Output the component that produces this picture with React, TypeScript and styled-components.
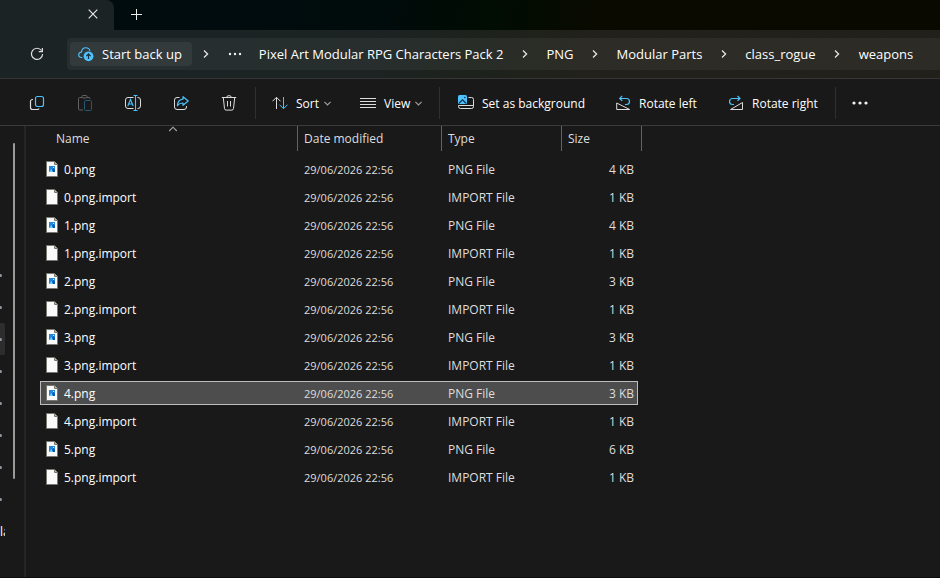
import React from "react";
import styled, { createGlobalStyle } from "styled-components";

const GlobalStyle = createGlobalStyle`
  *, *::before, *::after { box-sizing: border-box; }
  html, body, #root { height: 100%; }
  body {
    margin: 0;
    overflow: hidden;
    background: #191919;
    color: #ffffff;
    font-family: "Segoe UI", "Open Sans", "Noto Sans", sans-serif;
    font-size: 12px;
  }
  button { font: inherit; color: inherit; background: none; border: 0; padding: 0; }
  svg { display: block; flex: none; }
`;

const accent = "#4cc2ff";

const Window = styled.div`
  display: flex;
  flex-direction: column;
  height: 100vh;
  border-bottom: 1px solid #0c0c0c;
`;

const TitleBar = styled.header`
  display: flex;
  height: 30px;
  background: linear-gradient(100deg, #000c0e 20%, #000b0c 40%, #010c02 53%, #0a0a00 64%, #0a0900 100%);
`;

const Tab = styled.div`
  display: flex;
  align-items: center;
  justify-content: flex-end;
  width: 114px;
  padding: 0 11px 2px 0;
  border-radius: 0 8px 0 0;
  background: #1c2324;
`;

const TitleButton = styled.button`
  display: grid;
  place-items: center;
  width: 20px;
  height: 20px;
`;

const NewTabButton = styled(TitleButton)`
  width: 28px;
  height: 28px;
  margin-left: 8px;
`;

const NavigationBar = styled.nav`
  display: flex;
  align-items: center;
  height: 49px;
  padding-left: 27px;
  border-bottom: 1px solid #363636;
  background: linear-gradient(100deg, #1c2324 20%, #1c2322 40%, #1e221c 52%, #22211b 62%, #21201a 100%);
`;

const AddressBar = styled.div`
  display: flex;
  flex: 1;
  align-items: center;
  height: 32px;
  margin-left: 20px;
  padding-left: 3px;
  border-radius: 4px 0 0 4px;
  background: rgba(255, 255, 255, 0.05);
  font-size: 13px;
  white-space: nowrap;
  overflow: hidden;
`;

const BackupButton = styled.button`
  display: flex;
  align-items: center;
  gap: 8px;
  height: 24px;
  padding: 0 10px 0 8px;
  border-radius: 4px;
  background: rgba(255, 255, 255, 0.06);
`;

const CrumbArrow = styled.button<{ $width?: number }>`
  display: grid;
  flex: none;
  place-items: center;
  width: ${(p) => p.$width ?? 43}px;
  height: 24px;
`;

const OverflowButton = styled.button`
  display: grid;
  place-items: center;
  width: 30px;
  height: 24px;
  margin-right: 9px;
`;

const Crumb = styled.button`
  height: 24px;
`;

const Toolbar = styled.div`
  display: flex;
  align-items: center;
  height: 47px;
  padding: 2px 0 0 13px;
  border-bottom: 1px solid #3a3a3a;
  background: #191919;
  white-space: nowrap;
`;

const IconButton = styled.button`
  display: grid;
  place-items: center;
  width: 48px;
  height: 32px;
`;

const CommandButton = styled.button<{ $width: number; $inset?: number }>`
  display: flex;
  align-items: center;
  gap: 5px;
  min-width: ${(p) => p.$width}px;
  height: 32px;
  padding-left: ${(p) => p.$inset ?? 18}px;

  & > svg:first-child { margin-right: 3px; }
`;

const Separator = styled.span<{ $before?: number }>`
  width: 1px;
  height: 32px;
  margin-left: ${(p) => p.$before ?? 0}px;
  background: #2f2f2f;
`;

const Body = styled.div`
  display: flex;
  flex: 1;
  min-height: 0;
`;

const SidePane = styled.aside`
  display: flex;
  width: 26px;
  border-right: 2px solid #262626;
`;

const Tree = styled.ul`
  width: 5px;
  margin: 0;
  padding: 133px 0 0;
  overflow: hidden;
  list-style: none;
`;

const TreeItem = styled.li<{ $active?: boolean }>`
  display: flex;
  align-items: center;
  height: 32px;
  border-radius: 0 2px 2px 0;
  background: ${(p) => (p.$active ? "#2d2d2d" : "transparent")};
`;

const Pin = styled.span`
  width: 2px;
  height: 3px;
  border-radius: 0 2px 2px 0;
  background: #8d97a3;
`;

const ScrollThumb = styled.div`
  width: 2px;
  height: 336px;
  margin: 17px 0 0 8px;
  border-radius: 1px;
  background: #9a9a9a;
`;

const FileTable = styled.table`
  display: block;
  flex: 1;
  border-spacing: 0;
`;

const TableHead = styled.thead`
  display: block;
  padding-left: 23px;
`;

const HeaderRow = styled.tr`
  display: grid;
  grid-template-columns: 249px 144px 120px 80px;
`;

const HeaderCell = styled.th`
  position: relative;
  height: 25px;
  padding: 0 6px;
  border-right: 1px solid #636363;
  color: #dedede;
  font-weight: 400;
  line-height: 25px;
  text-align: left;

  &:first-child { padding-left: 7px; }
`;

const SortMark = styled.svg`
  position: absolute;
  top: 0;
  left: 50%;
  transform: translateX(-50%);
`;

const TableBody = styled.tbody`
  display: block;
  padding: 6px 0 0 14px;
`;

const FileRow = styled.tr<{ $selected: boolean }>`
  display: grid;
  grid-template-columns: 258px 144px 120px 76px;
  align-items: center;
  width: 598px;
  height: 24px;
  margin-bottom: 4px;
  color: #dedede;
  background: ${(p) => (p.$selected ? "#4d4d4d" : "transparent")};
  outline: ${(p) => (p.$selected ? "1px solid #bdbdbd" : "none")};
  outline-offset: -1px;
`;

const NameCell = styled.td`
  display: flex;
  align-items: center;
  gap: 6px;
  padding: 0 6px;
  color: #ffffff;
`;

const Cell = styled.td`
  padding: 0 6px;
`;

const DateCell = styled(Cell)`
  font-size: 11px;
`;

const SizeCell = styled(Cell)`
  padding-right: 4px;
  text-align: right;
`;

const Chevron = () => (
  <svg width="6" height="8" viewBox="0 0 6 8" fill="none" stroke="#e6e6e6" strokeWidth="1.3">
    <path d="M1 0.5 4.6 4 1 7.5" />
  </svg>
);

const DownChevron = () => (
  <svg width="7" height="5" viewBox="0 0 7 5" fill="none" stroke="#a0a0a0" strokeWidth="1.1">
    <path d="M0.4 0.8 3.5 3.9 6.6 0.8" />
  </svg>
);

const Dots = ({ size = 2 }: { size?: number }) => (
  <svg width="16" height="4" viewBox="0 0 16 4" fill="#f2f2f2">
    <circle cx={size > 2 ? 2 : 3} cy="2" r={size > 2 ? 1.6 : 1.2} />
    <circle cx="8" cy="2" r={size > 2 ? 1.6 : 1.2} />
    <circle cx={size > 2 ? 14 : 13} cy="2" r={size > 2 ? 1.6 : 1.2} />
  </svg>
);

const CloudIcon = () => (
  <svg width="16" height="16" viewBox="0 0 16 16" fill="none">
    <path d="M4.3 11.5H3.6C1.8 11.5.7 10.3.7 8.8S1.9 6.2 3.5 6.1C3.7 3.5 5.3 1.7 7.8 1.7S11.6 3.2 12 5" stroke={accent} strokeWidth="1.1" />
    <circle cx="10.5" cy="10.3" r="4.9" fill={accent} />
    <path d="M10.5 13V8M8.3 10.1 10.5 7.9 12.7 10.1" stroke="#1d3340" strokeWidth="1.2" />
  </svg>
);

const CopyIcon = () => (
  <svg width="16" height="16" viewBox="0 0 16 16" fill="none">
    <rect x="6.5" y="1.5" width="8" height="10" rx="2" stroke={accent} strokeWidth="1.2" />
    <path d="M4 4.5H3.5a2 2 0 0 0-2 2V12.5a2 2 0 0 0 2 2H8.5a1.5 1.5 0 0 0 1.5-1" stroke="#dcdcdc" strokeWidth="1.2" />
  </svg>
);

const PasteIcon = () => (
  <svg width="16" height="16" viewBox="0 0 16 16" fill="none">
    <path d="M5 2.5H2.5a1 1 0 0 0-1 1V14a1 1 0 0 0 1 1H6M10 2.5h2a1 1 0 0 1 1 1V4M5 1.5a1 1 0 0 1 1-1h3a1 1 0 0 1 1 1v.5a1 1 0 0 1-1 1H6a1 1 0 0 1-1-1z" stroke="#606060" />
    <rect x="7.5" y="5.5" width="7" height="10" rx="1" stroke="#265a74" />
  </svg>
);

const RenameIcon = () => (
  <svg width="18" height="16" viewBox="0 0 18 16" fill="none">
    <path d="M9.5 2.5H4a2.5 2.5 0 0 0-2.5 2.5V11A2.5 2.5 0 0 0 4 13.5H9.5M13.5 2.5H14A2.5 2.5 0 0 1 16.5 5V11A2.5 2.5 0 0 1 14 13.5H13.5" stroke="#dcdcdc" />
    <path d="M3.8 11 6.5 4.5 9.2 11M4.8 9H8.2M9.5.5H13.5M11.5.5V15.5M9.5 15.5H13.5" stroke={accent} strokeWidth="1.1" />
  </svg>
);

const ShareIcon = () => (
  <svg width="16" height="16" viewBox="0 0 16 16" fill="none">
    <path d="M6.5 2.5H4A2.5 2.5 0 0 0 1.5 5V12A2.5 2.5 0 0 0 4 14.5H11A2.5 2.5 0 0 0 13.5 12V11" stroke="#dcdcdc" />
    <path d="M10 1.7 15.2 6 10 10.3V8C7.3 7.9 5.7 8.9 4.4 10.7 4.6 6.9 6.6 4.4 10 4.1z" stroke={accent} strokeWidth="1.2" strokeLinejoin="round" />
  </svg>
);

const DeleteIcon = () => (
  <svg width="16" height="16" viewBox="0 0 16 16" fill="none" stroke="#dcdcdc">
    <path d="M.8 2.5H15.2M5.8 2.3a2.2 1.7 0 0 1 4.4 0M2.3 2.7 3.5 13.6A1.7 1.7 0 0 0 5.2 15.1H10.8A1.7 1.7 0 0 0 12.5 13.6L13.7 2.7M6.5 6V11.5M9.5 6V11.5" />
  </svg>
);

const SortIcon = () => (
  <svg width="16" height="14" viewBox="0 0 16 14" fill="none">
    <path d="M4.5 13V1.5M.5 5.3 4.5 1.3 8.5 5.3" stroke="#dcdcdc" />
    <path d="M11.5 1V12.5M7.5 8.7 11.5 12.7 15.5 8.7" stroke={accent} />
  </svg>
);

const ViewIcon = () => (
  <svg width="16" height="12" viewBox="0 0 16 12" stroke="#dcdcdc">
    <path d="M0 1.5H16M0 4.5H16M0 7.5H16M0 10.5H16" />
  </svg>
);

const BackgroundIcon = () => (
  <svg width="16" height="16" viewBox="0 0 16 16" fill="none">
    <path d="M10.5 2.5H13.5A2 2 0 0 1 15.5 4.5V11.5A2 2 0 0 1 13.5 13.5H2.5A2 2 0 0 1 .5 11.5V10.5H15.5" stroke="#dcdcdc" />
    <rect x="0" y="0" width="9" height="9" rx="1.5" fill={accent} />
    <path d="M1 8.3 4.5 4.8 8 8.3" stroke="#183343" strokeWidth="1.3" />
    <circle cx="6.8" cy="2.5" r=".8" fill="#183343" />
  </svg>
);

const RotateLeftIcon = () => (
  <svg width="15" height="16" viewBox="0 0 15 16" fill="none">
    <path d="M.7 8V14.5H13.7z" stroke="#dcdcdc" />
    <path d="M6.2 1 3.7 3.4 6.2 5.8M3.9 3.5H10.5A3 3 0 0 1 10.5 9.5H9" stroke={accent} strokeWidth="1.2" />
  </svg>
);

const RotateRightIcon = () => (
  <svg width="15" height="16" viewBox="0 0 15 16" fill="none">
    <path d="M13.5 7.5V14.5H1.5z" stroke="#dcdcdc" />
    <path d="M8.5 1 11 3.4 8.5 5.8M10.8 3.5H3.5A3 3 0 0 0 3.5 9.5H5" stroke={accent} strokeWidth="1.2" />
  </svg>
);

const FileIcon = ({ picture }: { picture: boolean }) => (
  <svg width="12" height="16" viewBox="0 0 12 16">
    <path d="M.5.5H8.5L11.5 3.5V15.5H.5z" fill="#fafafa" stroke="#77776f" />
    <path d="M8.5.5V3.5H11.5" fill="#b8b8b2" stroke="#77776f" />
    {picture && (
      <>
        <rect x="3" y="5" width="6" height="6" fill="#2584dc" />
        <path d="M3 11 5.5 8 8 11z" fill="#64cdf8" />
        <path d="M6 9 7.5 7 9 9V11H7z" fill="#0758b5" />
        <rect x="7" y="6" width="1" height="1" fill="#d8f2ff" />
      </>
    )}
  </svg>
);

const crumbs = ["Pixel Art Modular RPG Characters Pack 2", "PNG", "Modular Parts", "class_rogue", "weapons"];
const imageSizes = ["4 KB", "4 KB", "3 KB", "3 KB", "3 KB", "6 KB"];
const files = imageSizes.flatMap((size, i) => [
  { name: `${i}.png`, type: "PNG File", size, picture: true },
  { name: `${i}.png.import`, type: "IMPORT File", size: "1 KB", picture: false },
]);

export default function App() {
  return (
    <>
      <GlobalStyle />
      <Window>
        <TitleBar>
          <Tab>
            <TitleButton aria-label="Close tab">
              <svg width="10" height="10" viewBox="0 0 10 10" stroke="#ededed" strokeWidth="1.1">
                <path d="M.7.7 9.3 9.3M9.3.7.7 9.3" />
              </svg>
            </TitleButton>
          </Tab>
          <NewTabButton aria-label="New tab">
            <svg width="11" height="11" viewBox="0 0 11 11" stroke="#ededed">
              <path d="M0 5.5H11M5.5 0V11" />
            </svg>
          </NewTabButton>
        </TitleBar>

        <NavigationBar aria-label="Address">
          <TitleButton aria-label="Refresh">
            <svg width="14" height="14" viewBox="0 0 14 14" fill="none" stroke="#dcdcdc" strokeWidth="1.2">
              <path d="M11.5 3.5A5.6 5.6 0 1 0 12.6 7M12.4 1V4.6H8.7" />
            </svg>
          </TitleButton>
          <AddressBar>
            <BackupButton>
              <CloudIcon />
              Start back up
            </BackupButton>
            <CrumbArrow $width={28} aria-label="Root folders"><Chevron /></CrumbArrow>
            <OverflowButton aria-label="Parent folders"><Dots /></OverflowButton>
            {crumbs.map((name, i) => (
              <React.Fragment key={name}>
                {i > 0 && <CrumbArrow aria-label={`Browse ${crumbs[i - 1]}`}><Chevron /></CrumbArrow>}
                <Crumb>{name}</Crumb>
              </React.Fragment>
            ))}
          </AddressBar>
        </NavigationBar>

        <Toolbar role="toolbar">
          <IconButton aria-label="Copy"><CopyIcon /></IconButton>
          <IconButton aria-label="Paste" disabled><PasteIcon /></IconButton>
          <IconButton aria-label="Rename"><RenameIcon /></IconButton>
          <IconButton aria-label="Share"><ShareIcon /></IconButton>
          <IconButton aria-label="Delete"><DeleteIcon /></IconButton>
          <Separator $before={2} />
          <CommandButton $width={88} $inset={16}><SortIcon />Sort<DownChevron /></CommandButton>
          <CommandButton $width={95} $inset={16}><ViewIcon />View<DownChevron /></CommandButton>
          <Separator />
          <CommandButton $width={158}><BackgroundIcon />Set as background</CommandButton>
          <CommandButton $width={113}><RotateLeftIcon />Rotate left</CommandButton>
          <CommandButton $width={124}><RotateRightIcon />Rotate right</CommandButton>
          <Separator />
          <IconButton aria-label="See more"><Dots size={3} /></IconButton>
        </Toolbar>

        <Body>
          <SidePane aria-label="Folders">
            <Tree>
              {Array.from({ length: 8 }, (_, i) => (
                <TreeItem key={i} $active={i === 2}><Pin /></TreeItem>
              ))}
              <TreeItem>la</TreeItem>
            </Tree>
            <ScrollThumb />
          </SidePane>
          <FileTable>
            <TableHead>
              <HeaderRow>
                <HeaderCell aria-sort="ascending">
                  Name
                  <SortMark width="9" height="6" viewBox="0 0 9 6" fill="none" stroke="#a8a8a8" strokeWidth="1.1">
                    <path d="M.7 5 4.5 1.2 8.3 5" />
                  </SortMark>
                </HeaderCell>
                <HeaderCell>Date modified</HeaderCell>
                <HeaderCell>Type</HeaderCell>
                <HeaderCell>Size</HeaderCell>
              </HeaderRow>
            </TableHead>
            <TableBody>
              {files.map((file) => (
                <FileRow key={file.name} $selected={file.name === "4.png"} aria-selected={file.name === "4.png"}>
                  <NameCell><FileIcon picture={file.picture} />{file.name}</NameCell>
                  <DateCell>29/06/2026 22:56</DateCell>
                  <Cell>{file.type}</Cell>
                  <SizeCell>{file.size}</SizeCell>
                </FileRow>
              ))}
            </TableBody>
          </FileTable>
        </Body>
      </Window>
    </>
  );
}
